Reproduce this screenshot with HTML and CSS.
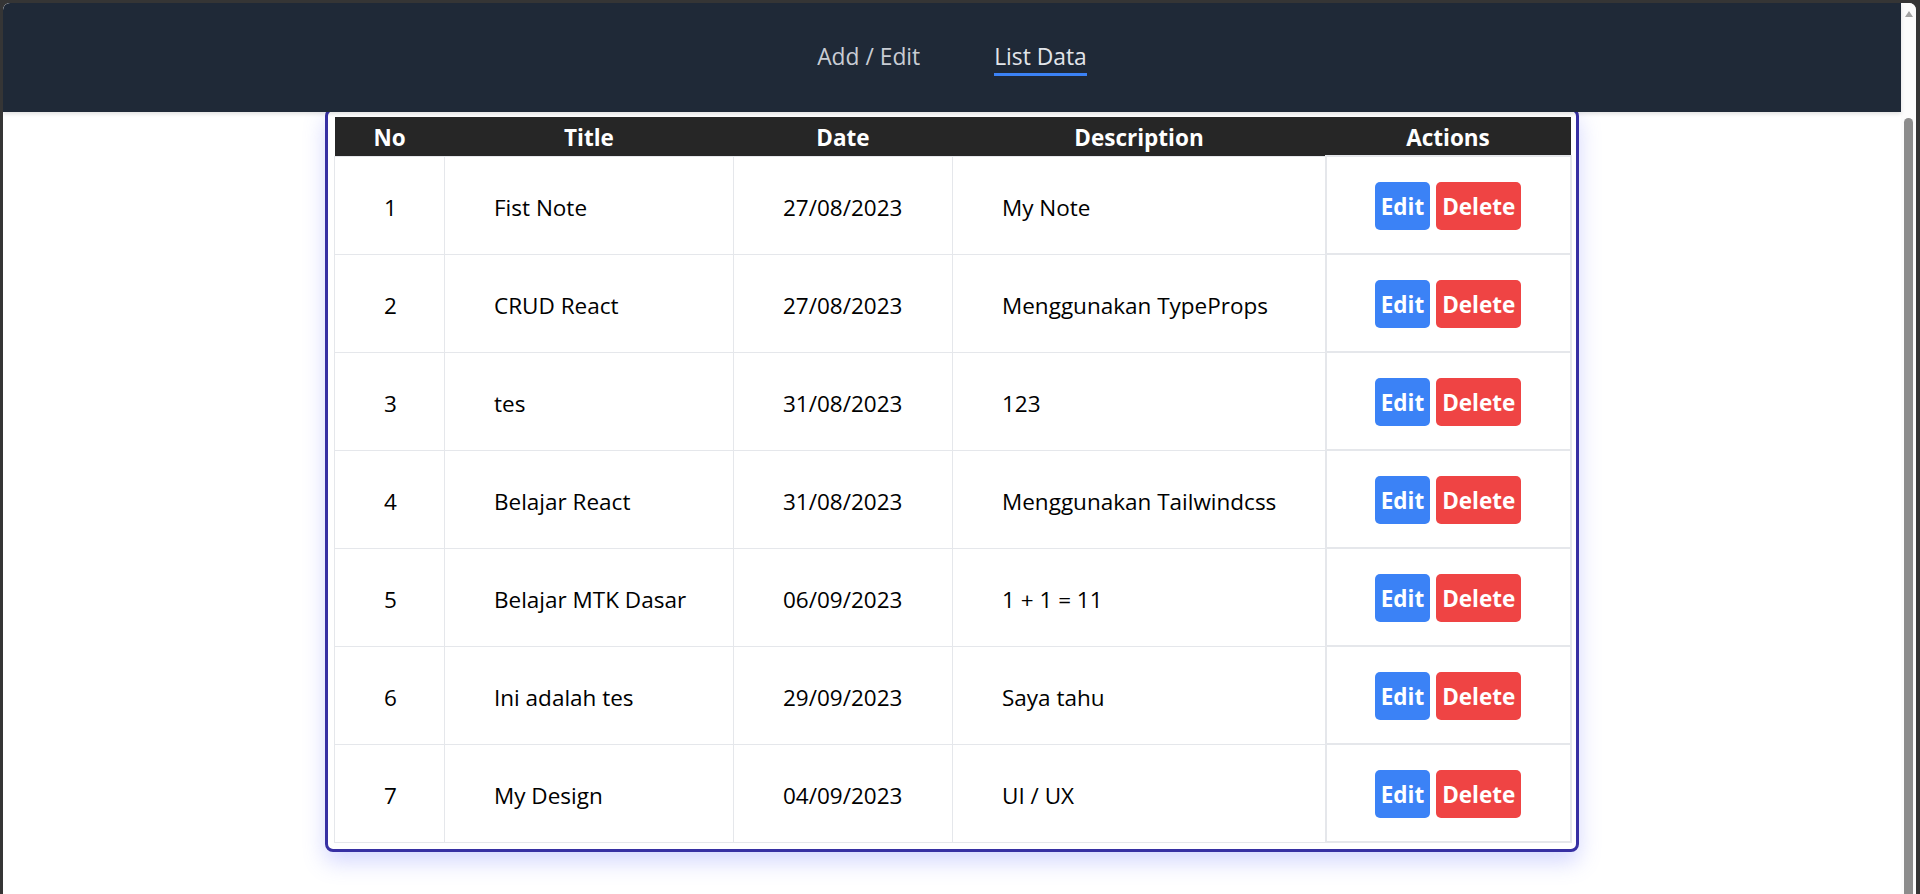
FILE: index.html
```html
<!DOCTYPE html>
<html lang="id">
<head>
<meta charset="utf-8">
<title>Notes</title>
<link rel="stylesheet" href="styles.css">
</head>
<body>
<div class="frame">
  <div class="window">
    <div class="page">
      <nav class="nav">
        <a class="nav-link">Add / Edit</a>
        <a class="nav-link active">List Data</a>
      </nav>
      <main class="content">
        <div class="card">
          <table class="notes">
            <colgroup>
              <col class="c-no">
              <col class="c-title">
              <col class="c-date">
              <col class="c-desc">
              <col class="c-act">
            </colgroup>
            <thead>
              <tr><th>No</th><th>Title</th><th>Date</th><th>Description</th><th>Actions</th></tr>
            </thead>
            <tbody>
              <tr><td>1</td><td>Fist Note</td><td>27/08/2023</td><td>My Note</td><td class="actions"><div class="btns"><button class="btn edit">Edit</button><button class="btn del">Delete</button></div></td></tr>
              <tr><td>2</td><td>CRUD React</td><td>27/08/2023</td><td>Menggunakan TypeProps</td><td class="actions"><div class="btns"><button class="btn edit">Edit</button><button class="btn del">Delete</button></div></td></tr>
              <tr><td>3</td><td>tes</td><td>31/08/2023</td><td>123</td><td class="actions"><div class="btns"><button class="btn edit">Edit</button><button class="btn del">Delete</button></div></td></tr>
              <tr><td>4</td><td>Belajar React</td><td>31/08/2023</td><td>Menggunakan Tailwindcss</td><td class="actions"><div class="btns"><button class="btn edit">Edit</button><button class="btn del">Delete</button></div></td></tr>
              <tr><td>5</td><td>Belajar MTK Dasar</td><td>06/09/2023</td><td>1 + 1 = 11</td><td class="actions"><div class="btns"><button class="btn edit">Edit</button><button class="btn del">Delete</button></div></td></tr>
              <tr><td>6</td><td>Ini adalah tes</td><td>29/09/2023</td><td>Saya tahu</td><td class="actions"><div class="btns"><button class="btn edit">Edit</button><button class="btn del">Delete</button></div></td></tr>
              <tr><td>7</td><td>My Design</td><td>04/09/2023</td><td>UI / UX</td><td class="actions"><div class="btns"><button class="btn edit">Edit</button><button class="btn del">Delete</button></div></td></tr>
            </tbody>
          </table>
        </div>
      </main>
    </div>
    <div class="scrollbar">
      <span class="sb-arrow"></span>
      <span class="sb-thumb"></span>
    </div>
  </div>
</div>
</body>
</html>
```

FILE: styles.css
```css
* { box-sizing: border-box; }
html, body { margin: 0; padding: 0; }
body {
  font-family: "Open Sans", "Noto Sans", sans-serif;
  background: #333333;
  overflow: hidden;
}
.frame {
  height: 894px;
  display: flex;
  padding: 3px 4px 0 3px;
  background: #353535;
  overflow: hidden;
}
.window {
  flex: 1;
  display: flex;
  border-radius: 7px 7px 0 0;
  overflow: hidden;
  background: #ffffff;
}
.page {
  flex: 1;
  min-width: 0;
  display: flex;
  flex-direction: column;
  background: #ffffff;
}
.nav {
  position: relative;
  z-index: 1;
  height: 109px;
  flex: none;
  background: #1f2937;
  display: flex;
  justify-content: center;
  align-items: flex-start;
  gap: 74px;
  padding-top: 39px;
  box-shadow: 0 2px 4px rgba(0, 0, 0, 0.12);
}
.nav-link {
  font-size: 22.8px;
  line-height: 30px;
  padding-bottom: 1px;
  border-bottom: 3px solid transparent;
  color: #c9cdd4;
  text-decoration: none;
}
.nav-link.active {
  color: #e2e5ea;
  border-bottom-color: #3b82f6;
}
.content {
  display: flex;
  justify-content: center;
  margin-top: -4px;
}
.card {
  width: 1254px;
  border: 3px solid #3730a3;
  border-radius: 8px;
  padding: 6px;
  background: #ffffff;
  box-shadow: 0 10px 22px rgba(99, 110, 250, 0.28);
}
.notes {
  width: 100%;
  border-collapse: collapse;
  table-layout: fixed;
  font-size: 22.5px;
  color: #000000;
}
.c-no { width: 110px; }
.c-title { width: 289px; }
.c-date { width: 219px; }
.c-desc { width: 373px; }
.c-act { width: 245px; }
.notes th {
  background: #262626;
  color: #ffffff;
  font-weight: 700;
  height: 39px;
  padding: 4px 0 0;
  text-align: center;
  line-height: 30px;
}
.notes td {
  border: 1px solid #e5e7eb;
  height: 98px;
  padding: 5px 0 0 49px;
  text-align: left;
  line-height: 30px;
  white-space: nowrap;
}
.notes td.actions {
  border-width: 2px;
  padding: 2px 0 0;
}
.btns {
  display: flex;
  justify-content: center;
  gap: 6px;
}
.btn {
  font-family: "Open Sans", "Noto Sans", sans-serif;
  font-size: 22.5px;
  font-weight: 700;
  line-height: 34px;
  padding: 8px 6px 6px;
  border: none;
  border-radius: 5px;
  color: #ffffff;
}
.btn.edit { background: #3b82f6; }
.btn.del { background: #ef4444; }
.scrollbar {
  width: 15px;
  flex: none;
  background: #fcfcfc;
  display: flex;
  flex-direction: column;
  align-items: center;
}
.sb-arrow {
  width: 0;
  height: 0;
  margin-top: 8px;
  border-left: 4.5px solid transparent;
  border-right: 4.5px solid transparent;
  border-bottom: 6px solid #a3a3a3;
}
.sb-thumb {
  flex: 1;
  width: 9px;
  margin-top: 101px;
  border-radius: 5px 5px 0 0;
  background: #8c8c8c;
}
```
